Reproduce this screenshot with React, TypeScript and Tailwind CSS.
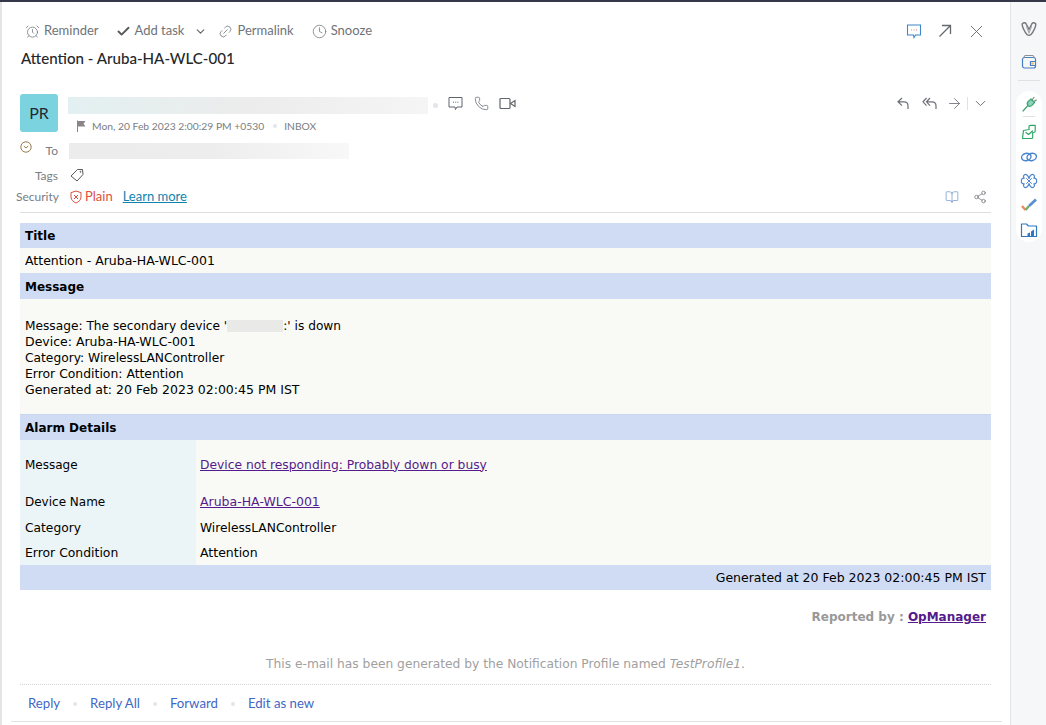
import { AlarmClock, ArrowRight, BookOpen, Check, ChevronDown, Clock, Link2, Phone, Share2, X } from 'lucide-react';

const UI = "font-['Lato','Liberation_Sans',sans-serif]";
const MAIL = "font-['DejaVu_Sans','Liberation_Sans',sans-serif]";

function ToolItem({ icon, label }: { icon: React.ReactNode; label: string }) {
  return (
    <div className="flex items-center gap-[4px] text-[13px] text-[#6f7378]">
      {icon}
      <span>{label}</span>
    </div>
  );
}

function SectionHead({ children }: { children: React.ReactNode }) {
  return <div className="h-[25px] flex items-center px-[5px] bg-[#d0dcf4] font-bold text-[12px] text-black">{children}</div>;
}

function AlarmRow({ label, height, children }: { label: React.ReactNode; height: string; children: React.ReactNode }) {
  return (
    <div className={`flex ${height}`}>
      <div className="w-[176px] shrink-0 bg-[#ebf4f6] px-[5px] flex items-center">{label}</div>
      <div className="flex-1 px-[4px] flex items-center">{children}</div>
    </div>
  );
}

function RailIcon({ children }: { children: React.ReactNode }) {
  return (
    <svg width="18" height="18" viewBox="0 0 18 18" fill="none" strokeWidth="1.2" strokeLinecap="round" strokeLinejoin="round">
      {children}
    </svg>
  );
}

function RightRail() {
  return (
    <aside className="w-[36px] shrink-0 border-l border-[#e2e4e8] bg-[#f6f7f9] flex flex-col items-center pt-[18px]">
      <RailIcon>
        <path d="M2.5 3.5c1.800-1.500 3.200-.8 4 1L9 9.500l2.500-5c.8-1.800 2.200-2.500 4-1 1.200 2-2.500 9-4.500 11-1 .8-3 .8-4 0-2-2-5.700-9-4.500-11z" stroke="#77797e" strokeWidth="1.5" />
        <path d="M6.500 6.500L9 13l2.500-6.500" stroke="#a4a6aa" strokeWidth="1.1" />
      </RailIcon>
      <div className="mt-[15px]">
        <RailIcon>
          <rect x="2.5" y="4.5" width="13" height="10.5" rx="2" stroke="#4a7fc4" />
          <path d="M4 4.500c0-1.200.5-2 1.500-2h7c1 0 1.500.8 1.500 2" stroke="#8a8f98" />
          <path d="M15.500 8.500h-5v4h5" stroke="#4a7fc4" />
          <circle cx="12.5" cy="10.5" r="1.3" fill="#f0b860" />
        </RailIcon>
      </div>
      <div className="w-[22px] h-px bg-[#dfe1e5] mt-[9px]" />
      <div className="w-[26px] h-[151px] mt-[10px] rounded-[13px] bg-white flex flex-col items-center pt-[4px]">
        <RailIcon>
          <path d="M11 4l3.500 3.500-2.500 2.800c-1.300 1.300-3 1.300-4 .2s-1-2.700.2-4L11 4z" fill="#8bd4c0" stroke="#3fa56f" />
          <path d="M12 5l2-2.500M14 6.500l2.200-1.500" stroke="#6b8a7a" />
          <path d="M7.500 11L3 16" stroke="#3fa56f" />
        </RailIcon>
        <div className="w-[12px] h-px bg-[#dfe1e5] mt-[3px] mb-[6px]" />
        <RailIcon>
          <path d="M3.500 7.500l5.500-1V3.500c0-.8.5-1.200 1.200-1.200h5V8c0 .9-.6 1.500-1.500 1.500h-1v4.700c0 .9-.5 1.300-1.300 1.300H2.500l1-8z" stroke="#2fa866" />
          <path d="M6 9.500l2.500 2 4-3.500" stroke="#2fa866" />
        </RailIcon>
        <div className="mt-[7px]">
          <RailIcon>
            <ellipse cx="6.3" cy="9" rx="4.8" ry="3.6" stroke="#4a86d0" strokeWidth="1.4" transform="rotate(-15 6.3 9)" />
            <ellipse cx="11.7" cy="9" rx="4.8" ry="3.6" stroke="#4a86d0" strokeWidth="1.4" transform="rotate(-15 11.7 9)" />
          </RailIcon>
        </div>
        <div className="mt-[6px]">
          <RailIcon>
            <path d="M9 6.500C8 3 6 1.800 4.500 2.800 3 3.800 3.500 5.500 4.200 6.200 2 6 .8 8 1.500 9 .8 10 2 12 4.200 11.800c-.7.700-1.200 2.400.3 3.400C6 16.200 8 15 9 11.500c1 3.500 3 4.700 4.500 3.700 1.500-1 1-2.700.3-3.400C16 12 17.200 10 16.500 9c.7-1-.5-3-2.700-2.800.7-.7 1.200-2.400-.3-3.400C12 1.800 10 3 9 6.500z" stroke="#4a86d0" />
            <path d="M6.500 6.500l5 5M11.500 6.500l-5 5" stroke="#4a86d0" strokeWidth="1" />
          </RailIcon>
        </div>
        <div className="mt-[6px]">
          <RailIcon>
            <path d="M2 10l3.500 4" stroke="#ec8a5a" strokeWidth="2.4" strokeLinecap="butt" />
            <path d="M5.500 14L9 10" stroke="#6db26d" strokeWidth="2.4" strokeLinecap="butt" />
            <path d="M9 10l7-6.500" stroke="#5a90d4" strokeWidth="2.8" strokeLinecap="butt" />
          </RailIcon>
        </div>
        <div className="mt-[7px]">
          <RailIcon>
            <path d="M1.500 15.500V3h5l2 2h8v10.500z" stroke="#2f78c4" />
            <path d="M7.500 15v-2.500l2.500-1V15zM11 15v-4.500l3-2V15z" fill="#2f78c4" />
          </RailIcon>
        </div>
      </div>
    </aside>
  );
}

export default function App() {
  return (
    <div className={`${UI} h-[725px] w-[1046px] overflow-hidden flex flex-col bg-white`}>
      <div className="h-[2px] shrink-0 bg-[#353849]" />
      <div className="flex-1 flex min-h-0">
        <div className="w-[2px] shrink-0 bg-[#e5e5e5]" />
        <main className="flex-1 min-w-0 flex flex-col">
          <div className="pl-[18px] pr-[19px]">
            {/* Toolbar */}
            <div className="h-[20px] mt-[19px] pl-[5px] pr-[9px] flex items-center">
              <ToolItem icon={<AlarmClock size={15} strokeWidth={1.2} />} label="Reminder" />
              <div className="ml-[17px]"><ToolItem icon={<Check size={15} strokeWidth={3} className="text-[#55585c]" />} label="Add task" /></div>
              <ChevronDown size={13} strokeWidth={2} className="ml-[10px] text-[#5f6368]" />
              <div className="ml-[11px]"><ToolItem icon={<Link2 size={15} strokeWidth={1.2} className="-rotate-45" />} label="Permalink" /></div>
              <div className="ml-[18px]"><ToolItem icon={<Clock size={15} strokeWidth={1.2} />} label="Snooze" /></div>
              <div className="ml-auto flex items-center">
                <svg width="16" height="16" viewBox="0 0 16 16" fill="none" strokeWidth="1.1">
                  <path d="M1.500 2h13v10H9.500L8 14.500 7.500 12h-6z" stroke="#3d86c9" />
                  <path d="M5 7h1M7.500 7h1M10 7h1" stroke="#ef7f7f" strokeWidth="1.2" />
                </svg>
                <svg width="14" height="14" viewBox="0 0 14 14" fill="none" stroke="#65686d" strokeWidth="1.3" className="ml-[16px]">
                  <path d="M1.500 12.500L12.500 1.500M4 1.500h8.500V10" />
                </svg>
                <X size={21} strokeWidth={1.05} className="ml-[14px] -mr-[5px] text-[#65686d]" />
              </div>
            </div>
            <h1 className="mt-[7px] ml-[1px] text-[15.1px] leading-[20px] font-medium text-[#24272b]">Attention - Aruba-HA-WLC-001</h1>

            {/* Sender */}
            <div className="mt-[26px] flex">
              <div className="w-[38px] h-[38px] rounded-[3px] bg-[#7bd3e0] flex items-center justify-center text-[16px] text-[#1f2a33]">PR</div>
              <div className="ml-[10px] flex-1 min-w-0">
                <div className="flex items-center h-[22px]">
                  <div className="w-[360px] h-[17px] bg-gradient-to-r from-[#e3f0f1] via-[#ececec] to-[#f5f5f5]" />
                  <div className="w-[5px] h-[5px] rounded-full bg-[#e4e5ea] ml-[5px]" />
                  <div className="ml-[10px] mb-[4px] flex items-center gap-[11px] text-[#5f656c]">
                    <svg width="15" height="15" viewBox="0 0 15 15" fill="none" stroke="currentColor" strokeWidth="1">
                      <path d="M1 1.500h13v9.500H9l-1.500 2.500L7 11H1z" />
                      <path d="M5 6.200h1M7.200 6.200h1M9.400 6.200h1" />
                    </svg>
                    <Phone size={15} strokeWidth={1.2} />
                    <svg width="17" height="13" viewBox="0 0 17 13" fill="none" stroke="currentColor" strokeWidth="1.2" className="-ml-[1px]">
                      <rect x="1" y="1.5" width="10" height="10" rx="1" />
                      <path d="M11.500 6.500l4.500-3v6z" />
                    </svg>
                  </div>
                  <div className="ml-auto mb-[4px] pr-[2px] flex items-center text-[#6d7076]">
                    <svg width="12" height="14" viewBox="0 0 12 14" fill="none" stroke="currentColor" strokeWidth="1.2">
                      <path d="M5 2L1 5.800l4 3.800M1 5.800h6c2.500 0 4 1.500 4 4V13" />
                    </svg>
                    <svg width="15" height="14" viewBox="0 0 15 14" fill="none" stroke="currentColor" strokeWidth="1.2" className="ml-[13px]">
                      <path d="M4.500 2L1 5.800l3.500 3.800M8 2L4.500 5.800 8 9.600M4.500 5.800H10c2.500 0 4 1.500 4 4V13" />
                    </svg>
                    <ArrowRight size={17} strokeWidth={1.2} className="ml-[9px]" />
                    <div className="w-px h-[13px] bg-[#e0e0e0] ml-[4px]" />
                    <ChevronDown size={17} strokeWidth={1.4} className="ml-[4px]" />
                  </div>
                </div>
                <div className="mt-[2px] pl-[8px] flex items-center text-[10.3px] leading-[16px] text-[#7a7d82]">
                  <svg width="10" height="12" viewBox="0 0 10 12" fill="#8a8588"><path d="M1 0.500h1V12H1zM2 1l7.500 0-2 2.700 2 2.800H2z" /></svg>
                  <span className="ml-[6px]">Mon, 20 Feb 2023 2:00:29 PM +0530</span>
                  <span className="w-[4px] h-[4px] rounded-full bg-[#e4e5ea] ml-[9px] mr-[7px]" />
                  <span>INBOX</span>
                </div>
              </div>
            </div>

            {/* To / Tags / Security */}
            <div className="mt-[7px] flex items-center h-[20px]">
              <svg width="12" height="12" viewBox="0 0 12 12" fill="none" className="-mt-[8px]" stroke="#8a6d3b" strokeWidth="0.9"><circle cx="6" cy="6" r="5.2" /><path d="M3.800 5l2.200 2 2.200-2" /></svg>
              <span className="w-[26px] text-right text-[12px] text-[#7a7d82]">To</span>
              <div className="ml-[11px] w-[280px] h-[16px] bg-gradient-to-r from-[#ececec] via-[#ededed] to-[#f8f8f8]" />
            </div>
            <div className="mt-[5px] flex items-center h-[20px]">
              <span className="w-[38px] text-right text-[12px] text-[#7a7d82]">Tags</span>
              <svg width="14" height="14" viewBox="0 0 14 14" fill="none" className="ml-[12px] -mt-[2px]" stroke="#55585c" strokeWidth="1"><path d="M7.500 1.500l5 0 .5 5-6 6.500L1 8z" /><circle cx="10.5" cy="3.8" r=".5" /></svg>
            </div>
            <div className="mt-[1px] flex items-center h-[20px] pr-[5px]">
              <span className="w-[42px] shrink-0 -ml-[4px] text-right text-[12px] text-[#7a7d82] whitespace-nowrap">Security</span>
              <svg width="12" height="14" viewBox="0 0 12 14" fill="none" className="ml-[12px]" stroke="#d9503f" strokeWidth="1"><path d="M6 1l5 1.700v4.300c0 3-2.500 5-5 6-2.500-1-5-3-5-6V2.700z" /><path d="M4 5l4 4M8 5l-4 4" /></svg>
              <span className="ml-[3px] text-[13px] text-[#df4f3c]">Plain</span>
              <span className="ml-[10px] text-[13px] text-[#1083ad] underline">Learn more</span>
              <div className="ml-auto flex items-center gap-[14px]">
                <BookOpen size={14} strokeWidth={1.1} className="text-[#5c86c2]" />
                <Share2 size={14} strokeWidth={1.2} className="text-[#65686d] -mr-[1px]" />
              </div>
            </div>
            <div className="h-px mt-[5px] bg-[#dedede]" />

            {/* Mail body */}
            <div className={`${MAIL} mt-[10px] text-[12.5px] leading-[16px] text-black`}>
              <SectionHead>Title</SectionHead>
              <div className="h-[25px] pt-[1px] flex items-center px-[5px] bg-[#f9faf5]">Attention - Aruba-HA-WLC-001</div>
              <div className="h-[26px] pt-[1px] flex items-center px-[5px] bg-[#d0dcf4] font-bold text-[12px]">Message</div>
              <div className="h-[115px] bg-[#f9faf5] px-[5px] pt-[19px]">
                <div className="flex items-center whitespace-pre text-[12.2px]">
                  Message: The secondary device '<span className="inline-block w-[56px] h-[12px] bg-[#e9e9e7]" />:' is down
                </div>
                <div>Device: Aruba-HA-WLC-001</div>
                <div className="text-[12.25px]">Category: WirelessLANController</div>
                <div className="text-[12.4px]">Error Condition: Attention</div>
                <div>Generated at: 20 Feb 2023 02:00:45 PM IST</div>
              </div>
              <div className="h-[26px] flex items-center px-[5px] bg-[#d0dcf4] font-bold text-[12px] border-t border-[#c9d4ee]">Alarm Details</div>
              <div className="bg-[#f9faf5]">
                <AlarmRow label={<span className="text-[12px]">Message</span>} height="h-[49px]">
                  <span className="text-[12.3px] text-[#551a8b] underline">Device not responding: Probably down or busy</span>
                </AlarmRow>
                <AlarmRow label={<span className="text-[12px]">Device Name</span>} height="h-[25px]">
                  <span className="text-[#551a8b] underline">Aruba-HA-WLC-001</span>
                </AlarmRow>
                <AlarmRow label={<span className="text-[12.25px] pt-[1px]">Category</span>} height="h-[26px]"><span className="text-[12.25px] pt-[1px]">WirelessLANController</span></AlarmRow>
                <AlarmRow label={<span className="text-[12.4px]">Error Condition</span>} height="h-[25px]">Attention</AlarmRow>
              </div>
              <div className="h-[25px] flex items-center justify-end px-[5px] bg-[#d0dcf4]">Generated at 20 Feb 2023 02:00:45 PM IST</div>
              <div className="mt-[19px] pr-[5px] text-right font-bold text-[12px] text-[#999]">
                Reported by : <span className="text-[#551a8b] underline">OpManager</span>
              </div>
              <div className="mt-[31px] text-center text-[12.25px] text-[#a0a0a0]">
                This e-mail has been generated by the Notification Profile named <i>TestProfile1</i>.
              </div>
            </div>
            <div className="h-0 mt-[12px] border-t border-dotted border-[#d5d5d5]" />
            <div className="h-[36px] pt-[1px] pl-[8px] flex items-center text-[13.2px] text-[#3f68c4]">
              <span>Reply</span>
              <span className="w-[4px] h-[4px] rounded-full bg-[#e4e5e8] mx-[13px]" />
              <span>Reply All</span>
              <span className="w-[4px] h-[4px] rounded-full bg-[#e4e5e8] mx-[13px]" />
              <span>Forward</span>
              <span className="w-[4px] h-[4px] rounded-full bg-[#e4e5e8] mx-[13px]" />
              <span>Edit as new</span>
            </div>
          </div>
          <div className="h-px ml-[9px] mr-[8px] bg-[#e2e2e2]" />
        </main>
        <RightRail />
      </div>
    </div>
  );
}
